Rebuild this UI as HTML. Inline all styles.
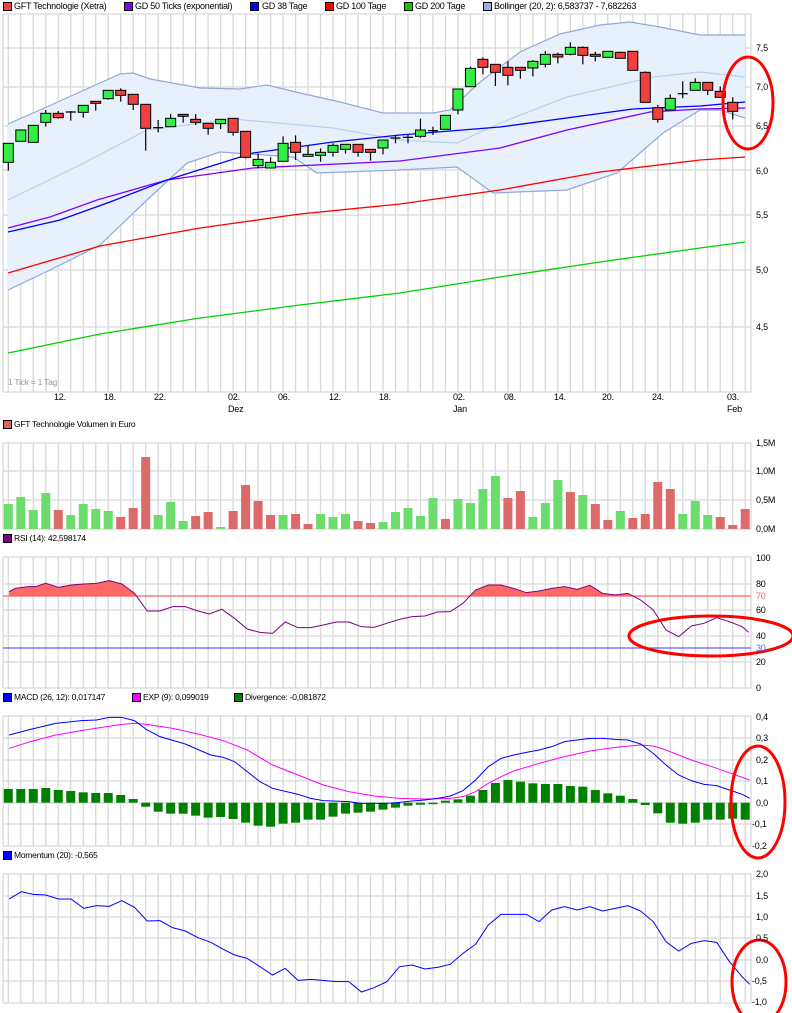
<!DOCTYPE html>
<html><head><meta charset="utf-8">
<style>
html,body{margin:0;padding:0;background:#fff;}
body{width:792px;height:1013px;position:relative;overflow:hidden;font-family:"Liberation Sans",sans-serif;font-size:9px;color:#000;}
.t{position:absolute;white-space:nowrap;line-height:10px;font-size:9px;letter-spacing:-0.25px;}
.sq{position:absolute;width:7px;height:7px;border:1px solid #000;}
.ax{position:absolute;white-space:nowrap;font-size:9px;line-height:10px;letter-spacing:-0.2px;}
svg{position:absolute;left:0;top:0;}
</style></head><body>
<svg id="s" width="792" height="1013" xmlns="http://www.w3.org/2000/svg"></svg>

<div class="sq" style="left:3px;top:2px;background:#f04040"></div><div class="t" style="left:14px;top:1px">GFT Technologie (Xetra)</div>
<div class="sq" style="left:124px;top:2px;background:#8000ff"></div><div class="t" style="left:135px;top:1px">GD 50 Ticks (exponential)</div>
<div class="sq" style="left:250px;top:2px;background:#0000ff"></div><div class="t" style="left:262px;top:1px">GD 38 Tage</div>
<div class="sq" style="left:325px;top:2px;background:#ff0000"></div><div class="t" style="left:336px;top:1px">GD 100 Tage</div>
<div class="sq" style="left:404px;top:2px;background:#00d000"></div><div class="t" style="left:415px;top:1px">GD 200 Tage</div>
<div class="sq" style="left:483px;top:2px;background:#9ab0e0"></div><div class="t" style="left:494px;top:1px">Bollinger (20, 2): 6,583737 - 7,682263</div>

<div class="t" style="left:8px;top:377px;color:#999;font-size:8.5px">1 Tick = 1 Tag</div>
<div class="sq" style="left:3px;top:420px;background:#e06060"></div><div class="t" style="left:14px;top:419px;font-size:8.5px">GFT Technologie Volumen in Euro</div>
<div class="sq" style="left:3px;top:534px;background:#800080"></div><div class="t" style="left:14px;top:533px;font-size:8.5px">RSI (14): 42,598174</div>
<div class="sq" style="left:3px;top:693px;background:#0000ff"></div><div class="t" style="left:14px;top:692px;font-size:8.5px">MACD (26, 12): 0,017147</div>
<div class="sq" style="left:132px;top:693px;background:#ff00ff"></div><div class="t" style="left:143px;top:692px;font-size:8.5px">EXP (9): 0,099019</div>
<div class="sq" style="left:234px;top:693px;background:#008000"></div><div class="t" style="left:245px;top:692px;font-size:8.5px">Divergence: -0,081872</div>
<div class="sq" style="left:3px;top:851px;background:#0000ff"></div><div class="t" style="left:14px;top:850px;font-size:8.5px">Momentum (20): -0,565</div>

<div class="ax" style="left:54px;top:392px">12.</div>
<div class="ax" style="left:104px;top:392px">18.</div>
<div class="ax" style="left:154px;top:392px">22.</div>
<div class="ax" style="left:228px;top:392px">02.</div><div class="ax" style="left:228px;top:404px">Dez</div>
<div class="ax" style="left:278px;top:392px">06.</div>
<div class="ax" style="left:329px;top:392px">12.</div>
<div class="ax" style="left:379px;top:392px">18.</div>
<div class="ax" style="left:453px;top:392px">02.</div><div class="ax" style="left:453px;top:404px">Jan</div>
<div class="ax" style="left:504px;top:392px">08.</div>
<div class="ax" style="left:554px;top:392px">14.</div>
<div class="ax" style="left:602px;top:392px">20.</div>
<div class="ax" style="left:652px;top:392px">24.</div>
<div class="ax" style="left:727px;top:392px">03.</div><div class="ax" style="left:727px;top:404px">Feb</div>

<div class="ax" style="left:756px;top:43px">7,5</div>
<div class="ax" style="left:756px;top:82px">7,0</div>
<div class="ax" style="left:756px;top:121px">6,5</div>
<div class="ax" style="left:756px;top:166px">6,0</div>
<div class="ax" style="left:756px;top:210px">5,5</div>
<div class="ax" style="left:756px;top:265px">5,0</div>
<div class="ax" style="left:756px;top:322px">4,5</div>
<div class="ax" style="left:756px;top:438px">1,5M</div>
<div class="ax" style="left:756px;top:466px">1,0M</div>
<div class="ax" style="left:756px;top:495px">0,5M</div>
<div class="ax" style="left:756px;top:524px">0,0M</div>
<div class="ax" style="left:756px;top:553px">100</div>
<div class="ax" style="left:756px;top:579px">80</div>
<div class="ax" style="left:756px;top:591px;color:#ff6060">70</div>
<div class="ax" style="left:756px;top:605px">60</div>
<div class="ax" style="left:756px;top:631px">40</div>
<div class="ax" style="left:756px;top:643px;color:#6060ff">30</div>
<div class="ax" style="left:756px;top:657px">20</div>
<div class="ax" style="left:756px;top:683px">0</div>
<div class="ax" style="left:756px;top:712px">0,4</div>
<div class="ax" style="left:756px;top:733px">0,3</div>
<div class="ax" style="left:756px;top:755px">0,2</div>
<div class="ax" style="left:756px;top:776px">0,1</div>
<div class="ax" style="left:756px;top:798px">0,0</div>
<div class="ax" style="left:752px;top:819px">-0,1</div>
<div class="ax" style="left:752px;top:841px">-0,2</div>
<div class="ax" style="left:756px;top:869px">2,0</div>
<div class="ax" style="left:756px;top:891px">1,5</div>
<div class="ax" style="left:756px;top:912px">1,0</div>
<div class="ax" style="left:756px;top:933px">0,5</div>
<div class="ax" style="left:756px;top:955px">0,0</div>
<div class="ax" style="left:752px;top:976px">-0,5</div>
<div class="ax" style="left:752px;top:997px">-1,0</div>

<script>
var S=document.getElementById('s'),NS='http://www.w3.org/2000/svg';
function el(n,a){var e=document.createElementNS(NS,n);for(var k in a)e.setAttribute(k,a[k]);S.appendChild(e);return e;}
function X(i){return 8.3+12.49*i;}
var GC='#d8d8d8';
function panel(t,b,hs){
  for(var i=0;i<60;i++)el('line',{x1:X(i),y1:t,x2:X(i),y2:b,stroke:GC,'stroke-width':1.3});
  hs.forEach(function(y){el('line',{x1:3,y1:y,x2:751,y2:y,stroke:GC,'stroke-width':1.3});});
  el('line',{x1:3,y1:t,x2:3,y2:b,stroke:GC,'stroke-width':1.3});
  el('line',{x1:751,y1:t,x2:751,y2:b,stroke:GC,'stroke-width':1.3});
}
function pl(pts,c,w){el('polyline',{points:pts.map(function(p){return p[0]+','+p[1]}).join(' '),fill:'none',stroke:c,'stroke-width':w||1});}
panel(14,392,[14,48,87,126,170,215,270,327,392]);
var up=[[8,124],[40,110],[80,92],[120,74],[133,73],[150,79],[200,88],[240,89],[267,85],[300,93],[340,102],[383,113],[433,113],[450,110],[480,82],[520,52],[560,34],[600,25],[630,22],[660,27],[700,35],[745,35]];
var lo=[[745,118],[720,110],[700,110],[663,133],[617,173],[567,190],[493,193],[457,167],[400,170],[317,173],[293,157],[220,152],[187,163],[147,200],[100,245],[50,270],[8,290]];
el('polygon',{points:up.concat(lo).map(function(p){return p.join(',')}).join(' '),fill:'#e8f0fb'});
pl(up,'#90a8dc',1.2);pl(lo,'#90a8dc',1.2);
pl([[8,200],[80,165],[147,130],[233,119],[333,128],[400,140],[457,143],[500,123],[567,97],[653,77],[700,72],[745,77]],'#b8d0f4',1.2);
pl([[8,273],[100,246],[200,228],[300,214],[400,204],[500,190],[600,172],[700,160],[745,157]],'#ff0000',1.3);
pl([[8,353],[100,334],[200,318],[300,305],[400,293],[500,277],[600,262],[700,248],[745,242]],'#00d000',1.3);
pl([[8,228],[50,217],[97,200],[167,180],[253,168],[400,161],[500,148],[567,130],[650,112],[700,109],[745,108]],'#8000ff',1.3);
pl([[8,232],[60,220],[110,202],[167,180],[253,153],[333,142],[400,135],[500,127],[633,109],[700,106],[745,102]],'#0000ff',1.3);
var c1=[[310,367,310,392,'g'],[270,304,268,304,'g'],[256,307,256,307,'g'],[220,247,210,260,'g'],[220,233,213,236,'r'],[213,216,213,242,'k'],[196,217,196,233,'g'],[184,190,184,212,'r'],[151,176,151,179,'g'],[151,166,145,185,'r'],[163,193,163,210,'r'],[193,265,193,332,'r'],[260,262,240,277,'k'],[235,260,222,260,'g'],[223,229,223,248,'r'],[238,247,222,255,'r'],[250,265,250,284,'r'],[238,251,238,267,'g'],[235,277,235,287,'r'],[274,352,274,355,'r'],[358,377,340,384,'g'],[367,384,352,384,'g'],[310,364,289,364,'g'],[307,337,286,360,'r'],[343,349,318,349,'g'],[337,346,325,365,'g'],[316,337,310,350,'g'],[313,328,313,341,'g'],[313,337,313,350,'r'],[328,337,328,362,'r']];
var c2=[[330,354,330,373,'g'],[321,323,317,340,'k'],[319,321,315,340,'k'],[300,319,266,324,'g'],[299,301,290,315,'k'],[256,298,256,298,'g'],[177,240,177,253,'g'],[115,170,110,170,'g'],[88,112,82,133,'r'],[103,127,103,168,'r'],[112,136,94,166,'r'],[112,121,112,146,'r'],[94,114,90,139,'g'],[73,103,63,112,'g'],[73,81,68,100,'r'],[52,73,37,76,'g'],[52,76,49,103,'r'],[73,79,65,94,'r'],[64,82,64,82,'g'],[67,85,65,85,'r'],[64,121,64,121,'r'],[127,217,124,217,'r'],[233,268,225,278,'r'],[205,240,193,240,'g'],[188,190,154,205,'k'],[157,181,145,181,'g'],[157,181,157,195,'r'],[184,202,169,202,'r'],[217,244,202,268,'r']];
var C=[];c1.forEach(function(c){C.push([40+c[0]/3,40+c[1]/3,40+c[2]/3,40+c[3]/3,c[4]]);});
c2.forEach(function(c){C.push([30+c[0]/3,30+c[1]/3,30+c[2]/3,30+c[3]/3,c[4]]);});
C.forEach(function(c,i){var x=X(i);
  el('line',{x1:x,y1:c[2],x2:x,y2:c[3],stroke:'#000','stroke-width':1.2});
  if(c[4]=='k'){el('line',{x1:x-5,y1:c[0]+1,x2:x+5,y2:c[0]+1,stroke:'#000','stroke-width':1.3});}
  else el('rect',{x:x-5,y:c[0],width:10,height:Math.max(c[1]-c[0],2),fill:c[4]=='g'?'#33ee44':'#f04040',stroke:'#000','stroke-width':1});
});
el('ellipse',{cx:748,cy:103,rx:25,ry:46,fill:'none',stroke:'#ff0000','stroke-width':3});
panel(443,529,[443,471,500,529]);
var vol=[[75,'g'],[96,'g'],[57,'g'],[108,'g'],[57,'r'],[42,'g'],[75,'g'],[60,'g'],[54,'g'],[36,'r'],[63,'r'],[216,'r'],[42,'g'],[81,'g'],[24,'g'],[39,'r'],[51,'r'],[6,'g'],[54,'r'],[132,'r'],[84,'r'],[42,'r'],[42,'g'],[45,'r'],[15,'r'],[45,'g'],[36,'g'],[45,'g'],[24,'r'],[18,'r'],[21,'g'],[51,'g'],[63,'g'],[39,'g'],[93,'g'],[30,'r'],[90,'g'],[78,'g'],[120,'g'],[159,'g'],[93,'r'],[114,'r'],[36,'g'],[78,'g'],[147,'g'],[111,'r'],[102,'g'],[75,'r'],[27,'r'],[54,'g'],[33,'r'],[45,'r'],[141,'r'],[120,'r'],[45,'g'],[84,'g'],[42,'g'],[36,'r'],[12,'r'],[60,'r']];
vol.forEach(function(v,i){var h=v[0]/3;el('rect',{x:X(i)-4.5,y:529-h,width:9,height:h,fill:v[1]=='g'?'#6cdc6c':'#dc6a6a'});});
panel(557,688,[557,584,610,636,662,688]);
var r=[[18,185],[30,175],[55,170],[70,170],[90,160],[115,172],[140,165],[165,162],[190,160],[215,152],[240,162],[265,190],[290,243],[315,243],[340,230],[365,230],[390,243],[412,252],[437,238],[462,265],[487,297],[512,307],[537,310],[562,276],[587,293],[612,293],[637,285],[662,276],[687,276],[712,290],[737,292],[762,280],[787,268],[812,260],[837,258],[862,246],[887,245],[912,220],[937,180],[962,165],[987,165],[1012,175],[1037,188],[1062,183],[1087,175],[1112,170],[1137,178],[1162,166],[1187,190],[1212,195],[1237,190],[1262,210],[1287,240],[1312,300],[1337,320],[1362,288],[1387,280],[1412,263],[1437,275],[1462,290],[1475,307]].map(function(p){return [p[0]*0.5076,530+p[1]/3];});
var cp=el('clipPath',{id:'c70'});var cr=document.createElementNS(NS,'rect');cr.setAttribute('x',0);cr.setAttribute('y',0);cr.setAttribute('width',792);cr.setAttribute('height',596);cp.appendChild(cr);
el('polygon',{points:r.map(function(p){return p.join(',')}).join(' ')+' '+r[r.length-1][0]+',596 '+r[0][0]+',596','clip-path':'url(#c70)',fill:'#ff6868'});
el('line',{x1:3,y1:596,x2:751,y2:596,stroke:'#ff6060','stroke-width':1.3});
el('line',{x1:3,y1:648,x2:751,y2:648,stroke:'#6060ff','stroke-width':1.3});
pl(r,'#800080',1);
el('ellipse',{cx:711,cy:636,rx:82,ry:20,fill:'none',stroke:'#ff0000','stroke-width':3});
panel(716,846,[716,738,760,781,803,824,846]);
var hb=[297,297,297,294,300,303,307,309,309,315,327,350,365,371,371,377,383,381,387,398,407,410,401,398,389,389,380,371,368,365,359,353,347,344,341,332,328,317,300,279,270,275,280,282,282,288,290,300,310,317,327,345,370,398,401,398,389,389,386,389];
hb.forEach(function(v,i){var y=690+v/3,z=802.7;el('rect',{x:X(i)-4.5,y:Math.min(y,z),width:9,height:Math.max(Math.abs(y-z),1.5),fill:'#008000'});});
function cv(a,y0){return a.map(function(p){return [p[0]*0.5076,y0+p[1]/3];});}
pl(cv([[18,175],[60,155],[110,135],[160,122],[210,110],[240,103],[265,100],[290,103],[340,115],[390,132],[440,152],[487,180],[537,225],[587,255],[637,285],[687,305],[737,318],[787,325],[837,327],[887,325],[912,320],[937,305],[962,280],[987,260],[1012,243],[1062,220],[1112,200],[1162,183],[1212,172],[1262,165],[1287,168],[1312,180],[1362,210],[1412,235],[1477,270]],690),'#ff00ff',1);
pl(cv([[18,135],[60,118],[110,100],[160,92],[190,90],[215,82],[240,82],[265,92],[290,120],[315,140],[365,162],[415,195],[440,202],[462,215],[487,245],[512,275],[537,295],[587,313],[612,325],[637,332],[687,335],[712,340],[762,340],[787,337],[812,333],[837,330],[862,325],[887,318],[912,302],[937,270],[962,230],[987,205],[1012,195],[1037,187],[1062,180],[1087,170],[1112,155],[1137,150],[1162,145],[1187,145],[1212,148],[1237,150],[1262,162],[1287,190],[1312,225],[1337,255],[1362,272],[1387,283],[1412,287],[1437,300],[1462,313],[1477,325]],690),'#0000ff',1);
el('ellipse',{cx:758,cy:802,rx:27,ry:56,fill:'none',stroke:'#ff0000','stroke-width':3});
panel(874,1003,[874,896,917,938,960,981,1003]);
pl(cv([[18,162],[42,140],[65,148],[90,150],[115,162],[140,162],[165,190],[190,182],[215,184],[240,167],[265,187],[290,228],[315,227],[340,248],[365,258],[390,278],[415,292],[440,313],[462,330],[487,340],[512,365],[537,390],[562,370],[587,406],[612,403],[637,406],[662,410],[687,410],[712,441],[737,428],[762,410],[787,365],[812,360],[837,372],[862,367],[887,358],[912,325],[937,298],[962,240],[987,208],[1012,208],[1037,208],[1062,230],[1087,195],[1112,185],[1137,195],[1162,185],[1187,198],[1212,190],[1237,182],[1262,198],[1287,230],[1312,290],[1337,318],[1362,295],[1387,287],[1412,292],[1437,350],[1462,395],[1477,418]],845),'#0000ff',1);
el('ellipse',{cx:759,cy:982,rx:27,ry:42,fill:'none',stroke:'#ff0000','stroke-width':3});
</script>
</body></html>
